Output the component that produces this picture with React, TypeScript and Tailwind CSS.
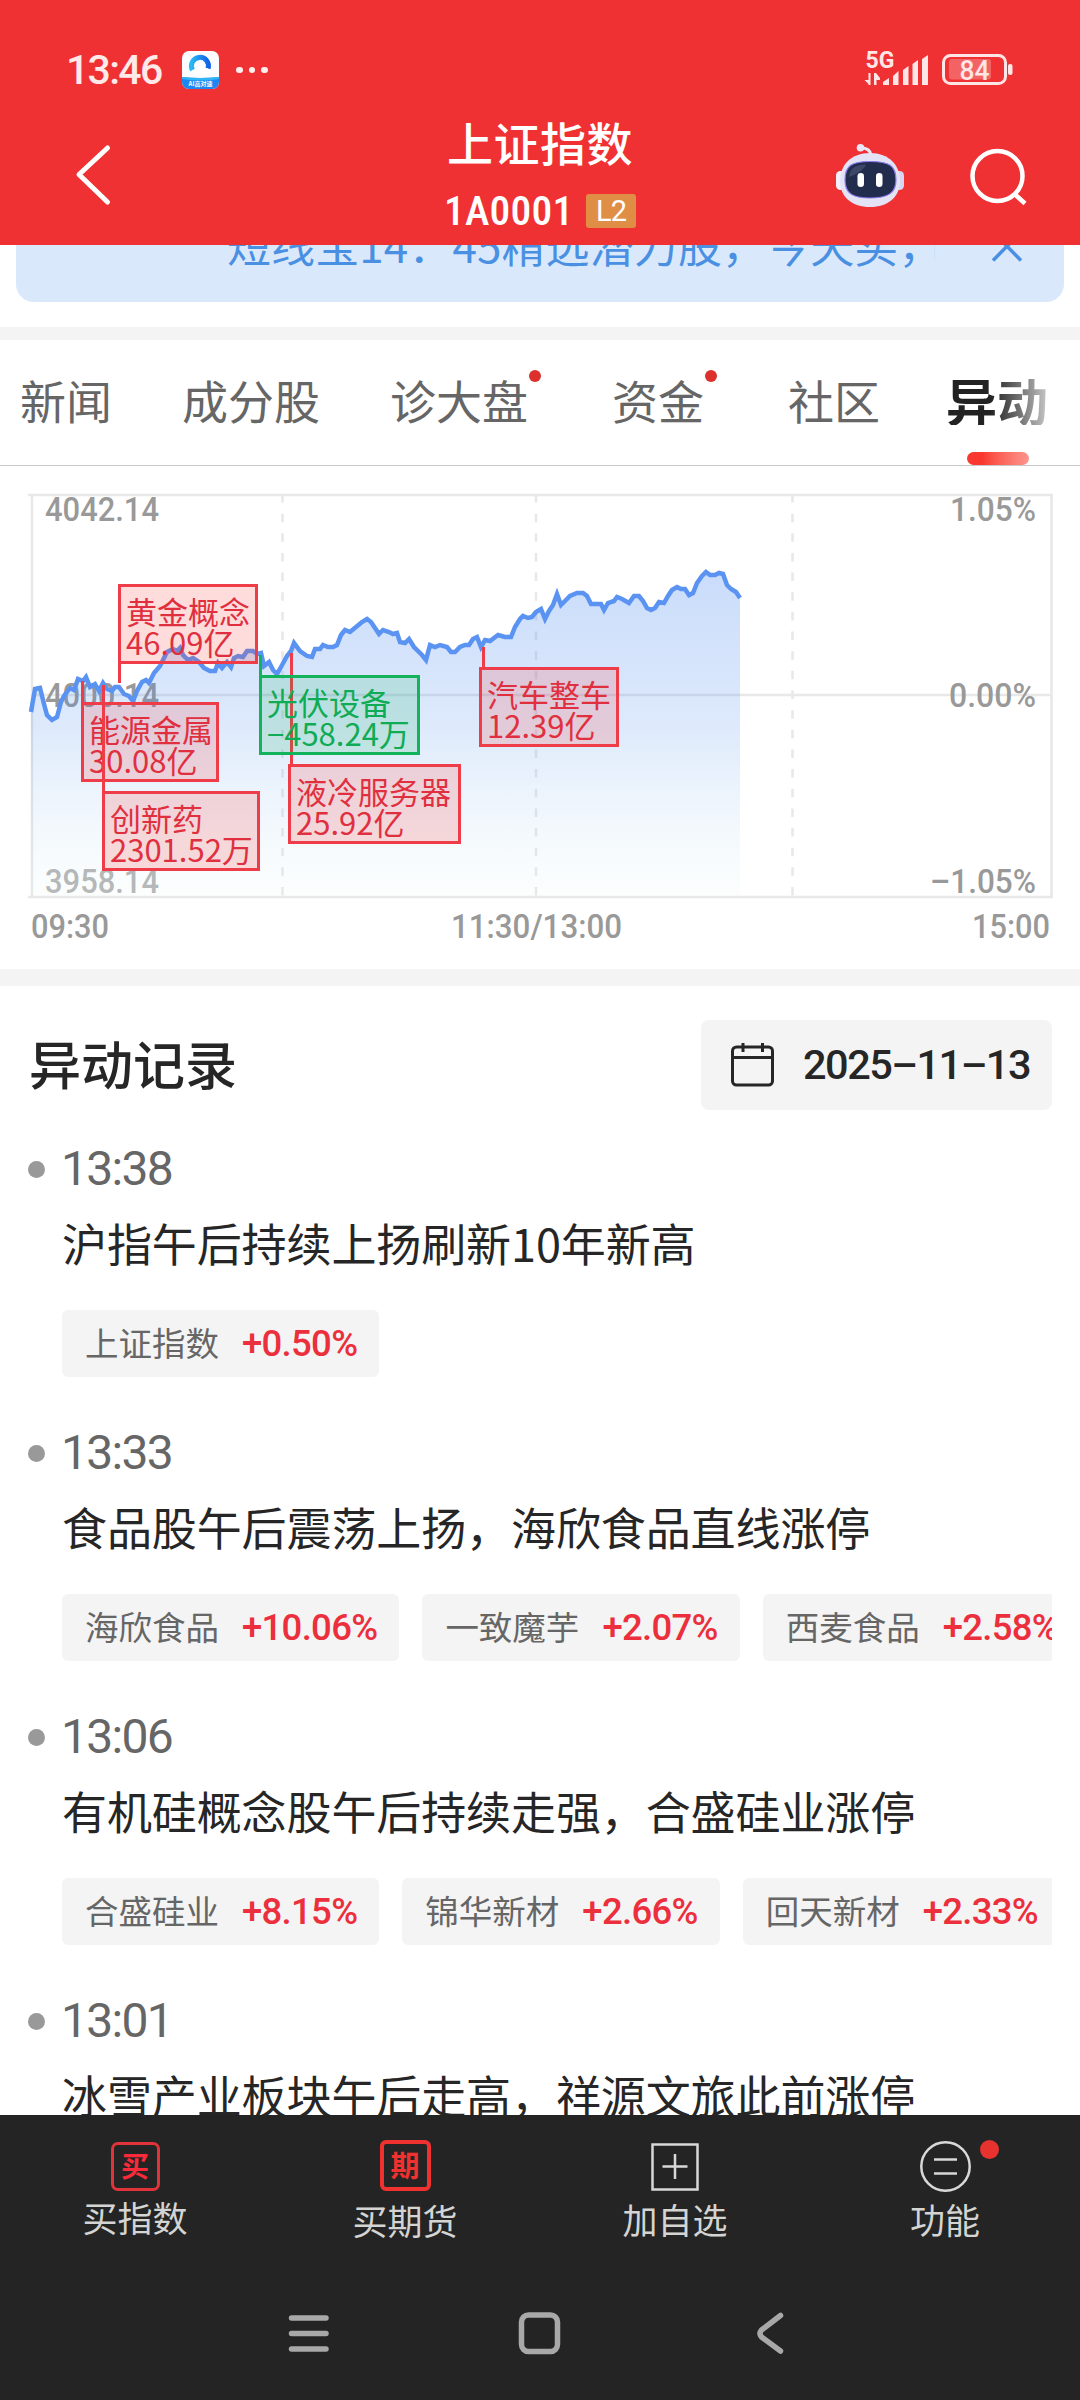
import clsx from 'clsx';

const tabs = [
    {name: '新闻', dot: false, margin: 'ml-5'},
    {name: '成分股', dot: false, margin: 'ml-[70px]'},
    {name: '诊大盘', dot: true, margin: 'ml-[70px]'},
    {name: '资金', dot: true, margin: 'ml-[84px]'},
    {name: '社区', dot: false, margin: 'ml-[84px]'},
];

const callouts = [
    {name: '能源金属', value: '30.08亿', up: true, x: 81, y: 236, w: 138, lead: 'down', len: 24, off: 0},
    {name: '创新药', value: '2301.52万', up: true, x: 102, y: 325, w: 158, lead: 'down', len: 109, off: 0},
    {name: '黄金概念', value: '46.09亿', up: true, x: 118, y: 118, w: 140, lead: 'up', len: 22, off: 0},
    {name: '液冷服务器', value: '25.92亿', up: true, x: 288, y: 298, w: 173, lead: 'down', len: 114, off: 2},
    {name: '光伏设备', value: '−458.24万', up: false, x: 259, y: 209, w: 161, lead: 'down', len: 23, off: 0},
    {name: '汽车整车', value: '12.39亿', up: true, x: 479, y: 201, w: 140, lead: 'down', len: 23, off: 3},
];

const records = [
    {
        time: '13:38',
        title: '沪指午后持续上扬刷新10年新高',
        stocks: [{name: '上证指数', change: '+0.50%'}],
    },
    {
        time: '13:33',
        title: '食品股午后震荡上扬，海欣食品直线涨停',
        stocks: [
            {name: '海欣食品', change: '+10.06%'},
            {name: '一致魔芋', change: '+2.07%'},
            {name: '西麦食品', change: '+2.58%'},
        ],
    },
    {
        time: '13:06',
        title: '有机硅概念股午后持续走强，合盛硅业涨停',
        stocks: [
            {name: '合盛硅业', change: '+8.15%'},
            {name: '锦华新材', change: '+2.66%'},
            {name: '回天新材', change: '+2.33%'},
        ],
    },
    {
        time: '13:01',
        title: '冰雪产业板块午后走高，祥源文旅此前涨停',
        stocks: [],
    },
];

const line =
    '31,246 35,223 40,222 44,238 47,249 52,254 57,251 61,236 64,230 70,222 74,224 78,213 83,215 86,211 90,221 95,218 99,225 103,217 107,223 112,225 115,221 119,221 124,228 129,230 133,235 137,225 142,216 146,214 149,217 154,207 160,200 163,194 167,186 173,183 177,185 180,182 183,189 188,194 193,192 199,196 204,202 210,205 215,205 218,197 222,202 227,196 231,201 234,192 238,190 243,191 247,185 253,185 257,188 261,187 264,200 269,196 273,204 277,208 281,201 287,190 291,185 294,177 300,185 307,190 312,191 315,183 320,183 323,179 328,181 333,181 337,179 341,169 345,164 350,166 356,161 362,156 367,153 371,156 375,162 379,168 383,164 389,166 393,168 397,167 400,176 405,177 409,173 414,181 422,189 426,194 430,179 435,181 440,179 447,181 451,186 455,186 460,181 465,179 469,179 473,173 477,171 481,181 485,174 490,175 498,169 505,171 511,171 515,161 520,153 523,150 528,152 532,151 536,146 541,143 545,153 549,145 553,139 557,128 561,139 565,135 570,130 577,127 583,127 587,130 591,138 601,138 604,144 608,137 614,135 617,131 622,133 629,137 634,130 639,130 643,135 647,142 651,144 655,142 659,136 664,137 668,130 672,124 677,121 681,123 685,123 689,129 693,127 697,117 702,110 706,106 710,109 715,109 719,107 723,108 727,119 731,123 736,126 740,132';

function StatusBar() {
    return (
        <div className="flex h-[105px] items-end justify-between pl-[66px] pr-[66px]">
            <div className="flex h-[70px] items-center">
                <span className="w-[99px] font-['Roboto'] text-[41px] leading-none font-medium tracking-[-1.700px] text-[#ffe9e9]">13:46</span>
                <svg className="ml-[17px] h-[38px] w-[37px]" viewBox="0 0 37 38">
                    <defs>
                        <linearGradient id="ring" x1="0" x2="1">
                            <stop offset="0" stopColor="#29b8f5"/>
                            <stop offset="1" stopColor="#1062e8"/>
                        </linearGradient>
                        <clipPath id="app"><rect width="37" height="38" rx="7"/></clipPath>
                    </defs>
                    <g clipPath="url(#app)">
                        <rect width="37" height="38" fill="#fafcff"/>
                        <path d="M10.500 19 A 8.500 8.500 0 1 1 26 17.500" fill="none" stroke="url(#ring)" strokeWidth="5"/>
                        <circle cx="17" cy="20" r="4.500" fill="#fff"/>
                        <circle cx="23.500" cy="21" r="4" fill="#fff"/>
                        <path d="M0 26 Q18 28 37 26 V38 H0 Z" fill="#1c86f2"/>
                        <path d="M0 26 Q18 28 37 26 V28 Q18 31 0 28 Z" fill="#2fb5f3"/>
                        <text x="18.500" y="35" textAnchor="middle" fontSize="6" fontWeight="700" fill="#fff">AI高对速</text>
                    </g>
                </svg>
                <div className="ml-[17px] flex gap-[6px]">
                    <i className="size-[6.500px] rounded-full bg-[#fff0f0]"/>
                    <i className="size-[6.500px] rounded-full bg-[#fff0f0]"/>
                    <i className="size-[6.500px] rounded-full bg-[#fff0f0]"/>
                </div>
            </div>
            <svg className="h-[70px] w-[150px]" viewBox="864 35 150 70" fill="#ffe6e6">
                <text x="865.500" y="68" fontFamily="Roboto" fontSize="23" fontWeight="700">5G</text>
                <path d="M870.500 73 V85 H868.500 V84 L864.500 80 H868.500 V73 Z M874 85 V73 H876 L880 78 V80 H876.500 V85 Z"/>
                <path d="M883 85 V82 L889 78 V85 Z M893 85 V76 L898.500 71 V85 Z M903 85 V70 L908.500 66 V85 Z M912.500 85 V64 L918 60 V85 Z M922 85 V59 L928 55 V85 Z"/>
                <rect x="943.500" y="55.500" width="62" height="28" rx="7" fill="none" stroke="#ffe6e6" strokeWidth="3"/>
                <rect x="949" y="59" width="42" height="20.500" rx="3" fillOpacity=".28"/>
                <text x="974.500" y="79.500" textAnchor="middle" fontFamily="Roboto" fontSize="27" fontWeight="500" textLength="30" lengthAdjust="spacingAndGlyphs">84</text>
                <rect x="1008" y="64" width="4.500" height="11" rx="2"/>
            </svg>
        </div>
    );
}

function Robot() {
    return (
        <svg className="h-[66px] w-[70px]" viewBox="835 143 70 66">
            <path d="M861 148 Q870 148 871 155" fill="none" stroke="#e9e6f8" strokeWidth="3"/>
            <circle cx="860.500" cy="147.800" r="3.800" fill="#e9e6f8"/>
            <rect x="836" y="171" width="10" height="19" rx="4.500" fill="#f1f0fb"/>
            <rect x="894" y="171" width="10" height="19" rx="4.500" fill="#d6d5f2"/>
            <path d="M870 153 C889 153 900 165 900 181 C900 197 888 207 870 207 C852 207 840 197 840 181 C840 165 851 153 870 153 Z" fill="#e4e3f6"/>
            <path d="M870 161.500 C890 161.500 896 166 896 180 C896 193 888 198 870 198 C852 198 845 193 845 180 C845 166 851 161.500 870 161.500 Z" fill="#222c4c" stroke="#8b7df0" strokeWidth="1.200"/>
            <path d="M849 177 C850 168 855 165 866 164.500 C864 170 857 174 849 177 Z" fill="#3d4868"/>
            <rect x="857.500" y="173" width="6.500" height="14" rx="3.200" fill="#fff"/>
            <rect x="876" y="173" width="6.500" height="14" rx="3.200" fill="#fff"/>
        </svg>
    );
}

function Header() {
    return (
        <header className="h-[245px] bg-[#f03133] text-white">
            <StatusBar/>
            <div className="flex h-[140px]">
                <div className="w-[360px] pl-[72px] pt-[36px]">
                    <svg className="h-[68px] w-[44px]" viewBox="0 0 44 68" fill="none" stroke="white" strokeWidth="5" strokeLinecap="round" strokeLinejoin="round">
                        <path d="M35.500 7 L7 33.500 L35.500 61"/>
                    </svg>
                </div>
                <div className="flex w-[360px] flex-col items-center">
                    <h1 className="mt-[13px] text-[46px] leading-[46px] font-medium tracking-[.5px]">上证指数</h1>
                    <div className="mt-[30px] flex items-center gap-[14px]">
                        <span className="w-[128px] font-['Roboto'] text-[41.500px] leading-[34px] font-medium tracking-[.2px] whitespace-nowrap [font-stretch:85%]">1A0001</span>
                        <span className="flex h-[34px] w-[50px] items-center justify-center rounded-[3px] bg-[#e08e46] font-['Roboto'] text-[29px] leading-[34px] tracking-[-1px]">L2</span>
                    </div>
                </div>
                <div className="flex w-[360px] pl-[115px] pt-[38px]">
                    <Robot/>
                    <svg className="ml-[62px] mt-1 h-[62px] w-[62px]" viewBox="967 147 62 62" fill="none" stroke="white" strokeWidth="4.500">
                        <circle cx="997.500" cy="176" r="25"/>
                        <path d="M1015 194.500 L1025 203.500"/>
                    </svg>
                </div>
            </div>
        </header>
    );
}

function Banner() {
    return (
        <div className="h-[82px] overflow-hidden">
            <div className="mx-4 flex h-[57px] rounded-b-[18px] bg-[#dae8fb]">
                <p className="-mt-[23px] ml-[211px] w-[707px] text-[44px] leading-[44px] tracking-[.1px] whitespace-nowrap text-[#4a90e2]">短线宝14：45精选潜力股，今天买，</p>
                <i className="h-[14px] w-px bg-[#cbdff7]"/>
                <svg className="-mt-[16px] ml-[55px] h-[34px] w-[34px]" viewBox="0 0 34 34" fill="none" stroke="#4a90e2" strokeWidth="3.500">
                    <path d="M3 3 L31 31.500 M31 3 L3 31.500"/>
                </svg>
            </div>
        </div>
    );
}

function Tabs() {
    return (
        <nav className="flex h-[126px] border-b border-[#c8c8c8] pt-[36px] text-[46px] leading-[46px] text-[#666]">
            {tabs.map((tab) => (
                <div key={tab.name} className={clsx('relative', tab.margin)}>
                    {tab.name}
                    {tab.dot && <i className="absolute -top-[6px] -right-[13px] size-3 rounded-full bg-[#dc302d]"/>}
                </div>
            ))}
            <div className="relative ml-[66px] h-[89px] w-[104px]">
                <span className="-mt-px block bg-linear-to-r from-[#222] from-42% to-[#d0d0d0] bg-clip-text text-[51px] leading-[50px] font-bold text-transparent">异动</span>
                <i className="absolute bottom-0 left-[21px] h-[13px] w-[62px] rounded-full bg-linear-to-r from-[#f9382f] from-25% to-[#fb958f]"/>
            </div>
        </nav>
    );
}

function Callout({item}) {
    return (
        <div
            className={clsx(
                'absolute h-[80px] border-[3px] pl-[5px] pt-[8px] text-[31px] leading-[31px] whitespace-nowrap',
                item.up ? 'border-[#ee3d48] bg-[#f83b3b]/18 text-[#e0303f]' : 'border-[#12b35b] bg-[#12b35b]/16 text-[#10ab55]'
            )}
            style={{left: item.x, top: item.y, width: item.w}}
        >
            <i
                className={clsx('absolute w-[3px]', item.up ? 'bg-[#ee3d48]' : 'bg-[#12b35b]', item.lead === 'up' ? 'top-full' : 'bottom-full')}
                style={{height: item.len, left: item.off - 3}}
            />
            {item.name}
            <br/>
            {item.value}
        </div>
    );
}

function Chart() {
    return (
        <section className="relative h-[503px] font-['Roboto'] text-[33px] font-medium text-[#999]">
            <svg className="h-[503px] w-[1080px]" viewBox="0 0 1080 503">
                <defs>
                    <linearGradient id="area" gradientUnits="userSpaceOnUse" x1="0" y1="100" x2="0" y2="431">
                        <stop offset="0" stopColor="#4a89f0" stopOpacity=".3"/>
                        <stop offset=".5" stopColor="#4a8cec" stopOpacity=".18"/>
                        <stop offset="1" stopColor="#dff8ee" stopOpacity=".1"/>
                    </linearGradient>
                </defs>
                <g stroke="#e8e8e8" strokeWidth="2.500" fill="none">
                    <path d="M28 29 H1051.500 V431 H28 M32 29 V431 M32 229 H1051"/>
                    <path d="M282.500 28 V431 M536 28 V431 M792.500 28 V431" strokeDasharray="8.500 11.150"/>
                </g>
                <g fill="#999" fontFamily="Roboto" fontSize="33">
                    <text x="45" y="55" textLength="114" lengthAdjust="spacingAndGlyphs">4042.14</text>
                    <text x="45" y="241" textLength="114" lengthAdjust="spacingAndGlyphs">4000.14</text>
                    <text x="45" y="427" textLength="114" lengthAdjust="spacingAndGlyphs" fill="#b2b2b2">3958.14</text>
                    <text x="950" y="55" textLength="86" lengthAdjust="spacingAndGlyphs">1.05%</text>
                    <text x="949" y="241" textLength="87" lengthAdjust="spacingAndGlyphs">0.00%</text>
                    <text x="930" y="427" textLength="106" lengthAdjust="spacingAndGlyphs">–1.05%</text>
                    <text x="31" y="472" textLength="78" lengthAdjust="spacingAndGlyphs">09:30</text>
                    <text x="451" y="472" textLength="171" lengthAdjust="spacingAndGlyphs">11:30/13:00</text>
                    <text x="972" y="472" textLength="78" lengthAdjust="spacingAndGlyphs">15:00</text>
                </g>
                <polygon points={`31,431 ${line} 740,431`} fill="url(#area)"/>
                <polyline points={line} fill="none" stroke="#5a93f1" strokeWidth="4.500"/>
            </svg>
            <div className="font-['Noto_Sans_CJK_SC'] font-normal">
                {callouts.map((item) => <Callout key={item.name} item={item}/>)}
            </div>
        </section>
    );
}

function Records() {
    return (
        <section className="h-[1129px] overflow-hidden">
            <div className="flex h-[124px] items-end justify-between pl-[29px] pr-[28px]">
                <h2 className="mb-[21px] text-[52px] leading-[52px] font-medium text-[#262626]">异动记录</h2>
                <button className="flex h-[90px] w-[351px] items-center rounded-lg bg-[#f4f4f4] pl-[30px]">
                    <svg className="h-[44px] w-[43px]" viewBox="0 0 43 44" fill="none" stroke="#262626" strokeWidth="3">
                        <rect x="1.500" y="4" width="40" height="38" rx="4"/>
                        <path d="M1.500 14.500 H41.500 M12 0 V9 M31.500 0 V9"/>
                    </svg>
                    <span className="ml-[29px] font-['Roboto'] text-[41.500px] font-medium tracking-[-1.500px] whitespace-nowrap text-[#262626]">2025–11–13</span>
                </button>
            </div>
            {records.map((record, i) => (
                <article key={record.time} className={clsx('pl-[28px]', i === 0 ? 'h-[298px] pt-[35px]' : 'h-[284px] pt-[21px]')}>
                    <div className="flex items-center gap-[16px]">
                        <i className="size-[17px] rounded-full bg-[#999]"/>
                        <time className="font-['Roboto'] text-[48px] leading-[48px] tracking-[-1.700px] text-[#666]">{record.time}</time>
                    </div>
                    <h3 className="mt-[27px] ml-[34px] text-[45px] leading-[45px] tracking-[-.1px] whitespace-nowrap text-[#262626]">{record.title}</h3>
                    <div className="mt-[45px] mr-[28px] ml-[34px] flex gap-[23px] overflow-hidden">
                        {record.stocks.map((stock) => (
                            <div key={stock.name} className="flex h-[67px] shrink-0 items-center gap-[23px] rounded-md bg-[#f4f4f4] pr-[22px] pl-[23px]">
                                <span className="-mt-[3px] text-[33.500px] leading-[40px] text-[#666]">{stock.name}</span>
                                <span className="font-['Roboto'] text-[36.500px] leading-[40px] font-medium tracking-[-.7px] text-[#ec2f3c]">{stock.change}</span>
                            </div>
                        ))}
                    </div>
                </article>
            ))}
        </section>
    );
}

function BottomBar() {
    return (
        <footer className="h-[285px] bg-[#242424] text-[#d4d4d2]">
            <div className="grid h-[170px] grid-cols-4 text-[35px] leading-[36px]">
                <div className="flex flex-col items-center pt-[27px]">
                    <span className="flex size-[49px] items-center justify-center rounded-[7px] border-[3px] border-[#e0343a] pb-[3px] text-[28px] leading-none font-bold text-[#fb2a3a]">买</span>
                    <span className="mt-[8px]">买指数</span>
                </div>
                <div className="flex flex-col items-center pt-[25px]">
                    <span className="flex size-[51px] items-center justify-center rounded-[6px] border-4 border-[#ef322f] pb-[3px] text-[29px] leading-none font-bold text-[#ef322f]">期</span>
                    <span className="mt-[11px]">买期货</span>
                </div>
                <div className="flex flex-col items-center pt-[28px]">
                    <svg className="size-[48px]" viewBox="0 0 48 48" fill="none" stroke="#d8d8d8" strokeWidth="2.500">
                        <path d="M1.500 1.500 H46.500 V46.500 H1.500 Z M24 11 V36 M11.500 23.500 H36.500"/>
                    </svg>
                    <span className="mt-[10px]">加自选</span>
                </div>
                <div className="flex flex-col items-center pt-[26px]">
                    <div className="relative">
                        <svg className="size-[51px]" viewBox="0 0 51 51" fill="none" stroke="#d8d8d8" strokeWidth="2.500">
                            <circle cx="25.500" cy="25.500" r="24.200"/>
                            <path d="M14 18.500 H37 M14 32.500 H37"/>
                        </svg>
                        <i className="absolute -top-px -right-[28px] size-[19px] rounded-full bg-[#e8322f]"/>
                    </div>
                    <span className="mt-[9px]">功能</span>
                </div>
            </div>
            <svg className="h-[100px] w-[1080px]" viewBox="0 2285 1080 100" fill="none" stroke="#a8a8a8" strokeWidth="5.500" strokeLinecap="round" strokeLinejoin="round">
                <path d="M291.500 2318 H326 M291.500 2333.500 H326 M291.500 2349 H326"/>
                <rect x="521.500" y="2315" width="36" height="36.500" rx="7"/>
                <path d="M780.500 2315.500 L761.500 2330 Q758.500 2333.500 761.500 2337 L780.500 2351"/>
            </svg>
        </footer>
    );
}

export default function App() {
    return (
        <div className="h-[2400px] w-[1080px] overflow-hidden bg-white font-['Noto_Sans_CJK_SC',sans-serif]">
            <Header/>
            <Banner/>
            <div className="h-[13px] bg-[#f4f4f4]"/>
            <Tabs/>
            <Chart/>
            <div className="h-[17px] bg-[#f4f4f4]"/>
            <Records/>
            <BottomBar/>
        </div>
    );
}
